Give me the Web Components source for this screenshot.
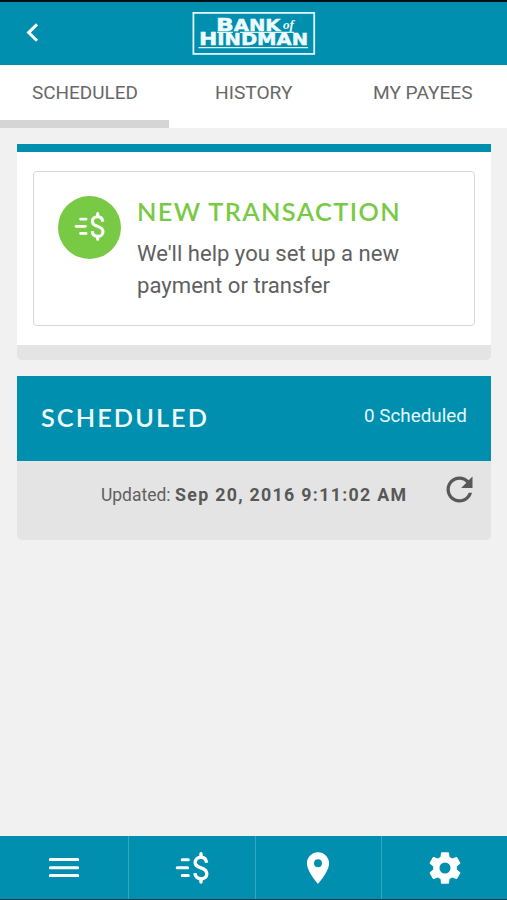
<!DOCTYPE html>
<html lang="en">
<head>
<meta charset="utf-8">
<title>Bank of Hindman</title>
<style>
html,body{margin:0;height:100%;background:#f1f1f1}
body{font-family:Roboto,"Liberation Sans",sans-serif;color:#606060}
</style>
</head>
<body>
<bank-app></bank-app>
<script>
const define = (name, markup) => customElements.define(name, class extends HTMLElement {
  constructor() {
    super();
    this.attachShadow({mode: 'open'}).innerHTML = typeof markup === 'function' ? markup(this) : markup;
  }
});

/* One line of text set to a fixed measure; w = measure, h = box height, b = baseline, s = font size */
define('fit-text', el => {
  const a = n => el.getAttribute(n);
  return `<style>:host{display:block;flex:none;width:${a('w')}px;height:${a('h')}px}svg{display:block;overflow:visible}
  text{fill:currentColor;white-space:pre}</style>
  <svg width="${a('w')}" height="${a('h')}"><text x="0" y="${a('b')}" font-size="${a('s')}" textLength="${a('w')}" lengthAdjust="${a('adjust') || 'spacingAndGlyphs'}">${a('text')}</text></svg>`;
});

define('money-icon', `<style>:host{display:block;width:34px;height:34px}svg{display:block;width:100%;height:100%}</style>
<svg viewBox="0 0 34 34" fill="none" stroke="#fff" stroke-width="3" stroke-linecap="round">
<path d="M7.2 8.8h6.1M2.2 16.8h10.4M7.2 24.6h6.1" stroke-width="3"/>
<path d="M31.6 11.8C31.2 8.3 29 6.3 26 6.3C22.7 6.3 20.2 8.4 20.2 11.4C20.2 14.6 22.8 15.8 26 16.9C29.2 18 31.8 19.4 31.8 22.7C31.8 25.8 29.3 27.8 26 27.8C22.6 27.8 20.1 25.8 20 22.1" stroke-width="3.4" stroke-linecap="butt"/>
<path d="M26 2.8v3M26 28v3" stroke-width="3.4"/></svg>`);

define('bank-logo', `<style>:host{display:block;margin-top:-1px}svg{display:block}text{fill:#effcff;stroke:#effcff;stroke-width:.45;font-family:"DejaVu Sans",sans-serif;font-weight:bold}.of{stroke:none;font-family:"Liberation Serif",serif;font-style:italic}</style>
<svg width="124" height="45" viewBox="192 11 124 45">
<rect x="193.4" y="12.9" width="120.8" height="41" fill="none" stroke="#dff7fc" stroke-width="1.8"/>
<text y="30.8" x="216" textLength="64.5" lengthAdjust="spacingAndGlyphs" font-size="15.5"><tspan font-size="18.5">B</tspan>ANK</text>
<text class="of" x="283" y="29" textLength="11" lengthAdjust="spacingAndGlyphs" font-size="12">of</text>
<path d="M217 32.4h16M240 32.4h54M198.5 47.6h109.5" stroke="#dff7fc" stroke-width="1.3"/>
<text y="45.4" x="199" textLength="109" lengthAdjust="spacingAndGlyphs" font-size="15.2"><tspan font-size="17">H</tspan>INDMAN</text>
</svg>`);

define('app-header', `<style>:host{display:grid;grid-template-columns:1fr auto 1fr;align-items:center;height:65px;box-sizing:border-box;border-top:2px solid #021015;background:#008fae}
.back{display:block;margin:-2px 0 0 26px}</style>
<svg class="back" width="14" height="22" viewBox="0 0 14 22"><path d="M11 2.4L2.6 10.6L11 18.8" fill="none" stroke="#fff" stroke-width="3"/></svg>
<bank-logo></bank-logo><span></span>`);

define('tab-item', `<style>:host{display:flex;flex:1;justify-content:center;align-items:flex-start;padding-top:17px;height:63px;box-sizing:border-box;background:#fff;border-bottom:0 solid #d5d5d5}
:host([active]){border-bottom-width:8px}</style><slot></slot>`);

define('app-tabs', `<style>:host{display:flex;color:#686868}</style>
<tab-item active><fit-text w="106" h="22" b="17.4" s="19.2" text="SCHEDULED"></fit-text></tab-item>
<tab-item><fit-text w="77.5" h="22" b="17.4" s="19.2" text="HISTORY"></fit-text></tab-item>
<tab-item><fit-text w="99.5" h="22" b="17.4" s="19.2" text="MY PAYEES"></fit-text></tab-item>`);

define('transaction-panel', `<style>
:host{display:block;box-sizing:border-box;height:216px;background:#fff;border-top:8px solid #008fae;border-bottom:15px solid #e4e4e4;border-radius:0 0 5px 5px;padding:19px 16px 0}
.card{box-sizing:border-box;height:155px;border:1.5px solid #d8d8d8;border-radius:4px;display:flex;padding:24px 0 0 24px;gap:15.5px}
.disc{width:63px;height:63px;flex:none;border-radius:50%;background:#78ca45;display:grid;place-items:center}
money-icon{width:31px;height:31px;margin:-2px 0 0 -1px}
.title{color:#78ca45;font-family:Lato,sans-serif;font-weight:600;letter-spacing:1.4px}
</style>
<div class="card"><div class="disc"><money-icon></money-icon></div>
<div><fit-text class="title" w="264" h="34" b="25.3" s="25" text="NEW TRANSACTION"></fit-text>
<fit-text w="262" h="31.5" b="31" s="22.7" text="We'll help you set up a new"></fit-text>
<fit-text w="193" h="31" b="30.6" s="22.7" text="payment or transfer"></fit-text></div></div>`);

define('schedule-panel', `<style>
:host{display:block;border-radius:0 0 5px 5px;background:#e4e4e4;height:164px}
.head{display:flex;justify-content:space-between;height:85px;box-sizing:border-box;padding:28px 24px 0;background:#008fae;color:#e2f9fd}
.title{font-family:Lato,sans-serif;font-weight:600;color:#effcff;letter-spacing:2px}
.foot{display:flex;padding:9px 12px 0 84px}
.label,.date{margin-top:13px}
.label{margin-right:4px}.date{font-weight:bold;color:#585858}
.refresh{margin-left:auto;display:block}
</style>
<div class="head"><fit-text class="title" w="168" h="30" b="22.5" s="24.5" text="SCHEDULED"></fit-text>
<fit-text w="103" h="24" b="17.8" s="19" text="0 Scheduled"></fit-text></div>
<div class="foot"><fit-text class="label" w="69.5" h="24" b="18" s="18" text="Updated:"></fit-text>
<fit-text class="date" w="231" h="24" b="18" s="17.8" adjust="spacing" text="Sep 20, 2016 9:11:02 AM"></fit-text>
<svg class="refresh" width="39" height="39" viewBox="0 0 24 24"><path fill="#585858" d="M17.65 6.35C16.2 4.9 14.21 4 12 4c-4.42 0-7.99 3.58-7.99 8s3.57 8 7.99 8c3.73 0 6.84-2.55 7.73-6h-2.08c-.82 2.33-3.04 4-5.65 4-3.31 0-6-2.69-6-6s2.69-6 6-6c1.66 0 3.14.69 4.22 1.78L13 11h7V4l-2.35 2.35z"/></svg></div>`);

define('app-nav', `<style>
:host{display:grid;grid-template-columns:128px 126.5px 126.5px 1fr;height:64px;box-sizing:border-box;background:#008fae;border-bottom:1.5px solid #063c49}
div{display:grid;place-items:center}div+div{border-left:1.5px solid #35a8c0}svg{display:block}
</style>
<div><svg width="30" height="22" viewBox="0 0 30 22"><path d="M1.3 2.6h27.4M1.3 10.7h27.4M1.3 18.6h27.4" stroke="#fff" stroke-width="3" stroke-linecap="round"/></svg></div>
<div><money-icon></money-icon></div>
<div><svg width="38" height="38" viewBox="0 0 24 24"><path fill="#fff" d="M12 2C8.13 2 5 5.13 5 9c0 5.25 7 13 7 13s7-7.75 7-13c0-3.87-3.13-7-7-7zm0 9.5a2.5 2.5 0 0 1 0-5 2.5 2.5 0 0 1 0 5z"/></svg></div>
<div><svg width="38" height="38" viewBox="0 0 24 24"><path fill="#fff" d="M19.43 12.98c.04-.32.07-.64.07-.98s-.03-.66-.07-.98l2.11-1.65c.19-.15.24-.42.12-.64l-2-3.46c-.12-.22-.39-.3-.61-.22l-2.49 1c-.52-.4-1.08-.73-1.69-.98l-.38-2.65C14.46 2.18 14.25 2 14 2h-4c-.25 0-.46.18-.49.42l-.38 2.65c-.61.25-1.17.59-1.69.98l-2.49-1c-.23-.09-.49 0-.61.22l-2 3.46c-.13.22-.07.49.12.64l2.11 1.65c-.04.32-.07.65-.07.98s.03.66.07.98l-2.11 1.65c-.19.15-.24.42-.12.64l2 3.46c.12.22.39.3.61.22l2.49-1c.52.4 1.08.73 1.69.98l.38 2.65c.03.24.24.42.49.42h4c.25 0 .46-.18.49-.42l.38-2.65c.61-.25 1.17-.59 1.69-.98l2.49 1c.23.09.49 0 .61-.22l2-3.46c.12-.22.07-.49-.12-.64l-2.11-1.65zM12 15.5a3.5 3.5 0 1 1 0-7 3.5 3.5 0 0 1 0 7z"/></svg></div>`);

define('bank-app', `<style>:host{display:flex;flex-direction:column;height:900px}
main{flex:1;display:flex;flex-direction:column;gap:16px;padding:16px 16px 0 17px}</style>
<app-header></app-header><app-tabs></app-tabs>
<main><transaction-panel></transaction-panel><schedule-panel></schedule-panel></main>
<app-nav></app-nav>`);
</script>
</body>
</html>
